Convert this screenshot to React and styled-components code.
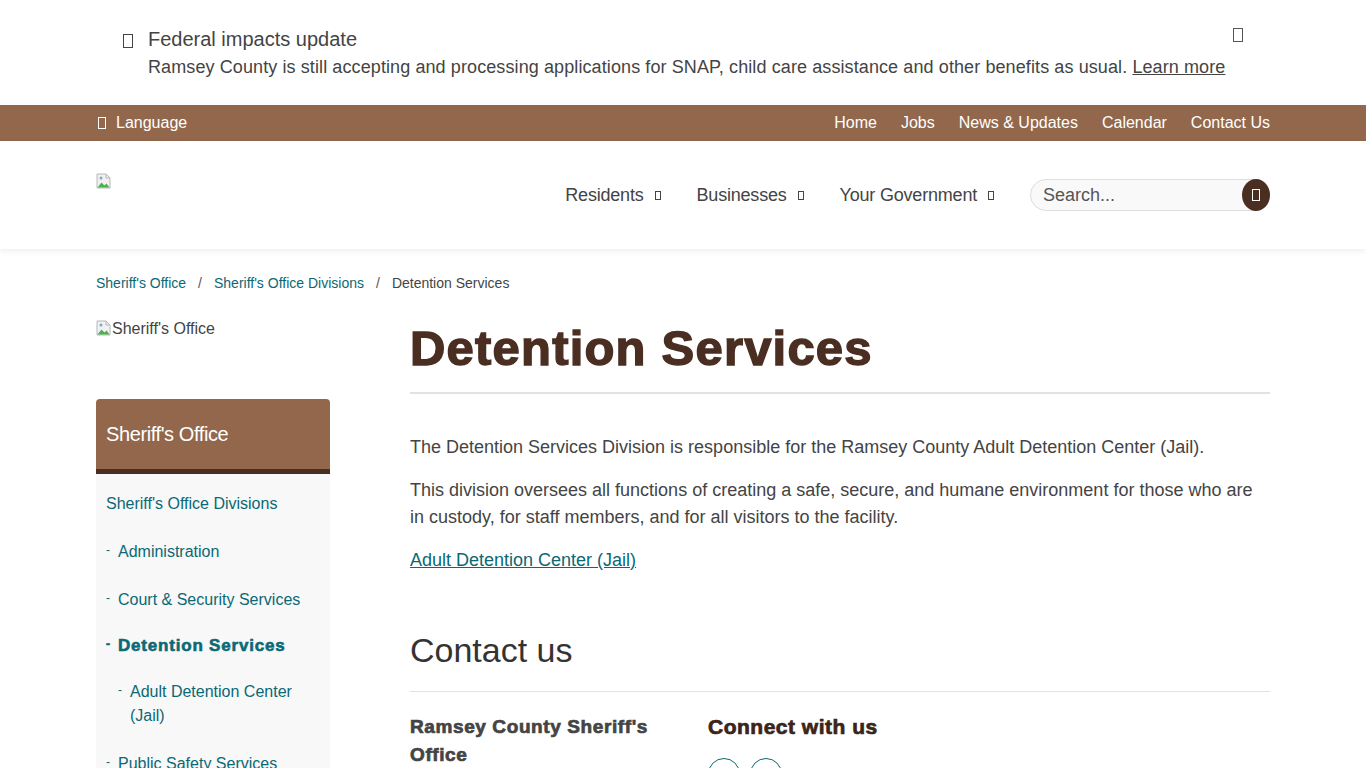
import React from 'react';
import styled, { createGlobalStyle } from 'styled-components';

const Global = createGlobalStyle`
  body {
    margin: 0;
    font-family: "Liberation Sans", Arial, sans-serif;
    color: #444;
    background: #fff;
  }
  * { box-sizing: border-box; }
`;

const Wrap = styled.div`
  width: 1174px;
  margin: 0 auto;
`;

const Tofu = styled.span`
  display: inline-block;
  width: ${(p) => p.$w || 9}px;
  height: ${(p) => p.$h || 14}px;
  border: 1px solid ${(p) => p.$color || 'currentColor'};
  vertical-align: middle;
`;

const Alert = styled.div`
  height: 105px;
  padding-top: 27px;
`;

const AlertRow = styled.div`
  display: flex;
  padding-left: 27px;
`;

const AlertIcon = styled.div`
  width: 25px;
  padding-top: 4px;
  color: #444;
`;

const AlertBody = styled.div`
  flex: 1;
`;

const AlertTitle = styled.div`
  font-size: 20px;
  line-height: 24px;
  color: #444;
`;

const AlertText = styled.div`
  font-size: 18px;
  line-height: 32px;
  color: #444;
  letter-spacing: 0.1px;
  a { color: #444; }
`;

const Close = styled.div`
  width: 37px;
  margin-top: -2px;
  color: #555;
`;

const UtilBar = styled.div`
  background: #93674b;
  height: 36px;
  color: #fff;
  font-size: 16px;
`;

const UtilInner = styled(Wrap)`
  display: flex;
  align-items: center;
  justify-content: space-between;
  height: 36px;
`;

const Lang = styled.div`
  display: flex;
  align-items: center;
  gap: 10px;
  padding-left: 2px;
`;

const UtilLinks = styled.nav`
  display: flex;
  gap: 24px;
`;

const Header = styled.header`
  height: 108px;
  background: #fff;
  box-shadow: 0 2px 6px rgba(0, 0, 0, 0.07);
  position: relative;
`;

const HeaderInner = styled(Wrap)`
  display: flex;
  align-items: center;
  justify-content: space-between;
  height: 108px;
`;

const LogoSlot = styled.div`
  align-self: flex-start;
  padding-top: 32px;
`;

const MainNav = styled.nav`
  display: flex;
  align-items: center;
`;

const NavItem = styled.div`
  display: flex;
  align-items: center;
  gap: 11px;
  font-size: 18px;
  color: #444;
  margin-right: 36px;
  letter-spacing: -0.2px;
`;

const Search = styled.div`
  position: relative;
  width: 240px;
  height: 32px;
`;

const SearchInput = styled.input`
  width: 100%;
  height: 32px;
  border: 1px solid #ddd;
  border-radius: 16px;
  background: #f9f9f9;
  padding: 0 36px 0 12px;
  font-family: "Liberation Sans", Arial, sans-serif;
  font-size: 18px;
  color: #444;
  outline: none;
  &::placeholder { color: #555; }
`;

const SearchBtn = styled.button`
  position: absolute;
  right: 0;
  top: 0;
  width: 28px;
  height: 32px;
  border: none;
  border-radius: 50%;
  background: #4b2e22;
  display: flex;
  align-items: center;
  justify-content: center;
  padding: 0;
`;

const Crumbs = styled.div`
  display: flex;
  gap: 12px;
  font-size: 14px;
  padding-top: 26px;
  height: 68px;
  a { color: #0b6874; text-decoration: none; }
`;

const Sep = styled.span`
  color: #555;
`;

const Body = styled(Wrap)`
  display: flex;
  gap: 80px;
`;

const Side = styled.aside`
  width: 234px;
  flex-shrink: 0;
`;

const AltImg = styled.div`
  display: flex;
  align-items: flex-start;
  font-size: 16px;
  color: #444;
  height: 82px;
  padding-top: 3px;
`;

const SideBox = styled.div`
  border-radius: 4px 4px 0 0;
  overflow: hidden;
`;

const SideHead = styled.div`
  background: #93674b;
  color: #fff;
  font-size: 20px;
  height: 75px;
  padding: 24px 10px 0;
  border-bottom: 5px solid #4b2e22;
  letter-spacing: -0.4px;
`;

const SideList = styled.ul`
  list-style: none;
  margin: 0;
  padding: 6px 0 0;
  background: #f8f8f9;
`;

const SideItem = styled.li`
  display: flex;
  padding: 12px 10px 12px ${(p) => 10 + (p.$level || 0) * 12}px;
  font-size: 16px;
  line-height: 24px;
  color: #0b6874;
  font-weight: ${(p) => (p.$active ? 700 : 400)};
  ${(p) => p.$active && 'padding-top: 10px; padding-bottom: 10px; -webkit-text-stroke: 0.6px #0b6874; letter-spacing: 0.8px; font-size: 17px;'}
`;

const Dash = styled.span`
  width: 12px;
  flex-shrink: 0;
  font-size: 12px;
  line-height: 20px;
  letter-spacing: 0;
`;

const ItemText = styled.span`
  max-width: ${(p) => p.$max || 220}px;
`;

const Main = styled.main`
  flex: 1;
`;

const H1 = styled.h1`
  margin: 0;
  padding-top: 5px;
  font-size: 49px;
  line-height: 52px;
  font-weight: 700;
  letter-spacing: 1.2px;
  color: #4b2e22;
  -webkit-text-stroke: 1.4px #4b2e22;
  padding-bottom: 18px;
  border-bottom: 2px solid #e2e2e2;
`;

const P = styled.p`
  font-size: 18px;
  line-height: 27px;
  margin: 0 0 16px;
  color: #444;
  &:first-of-type { margin-top: 40px; }
  a { color: #0b6874; }
`;

const H2 = styled.h2`
  font-size: 34px;
  font-weight: 400;
  color: #333;
  margin: 56px 0 0;
  line-height: 40px;
  padding-bottom: 21px;
  border-bottom: 1px solid #e2e2e2;
`;

const Cols = styled.div`
  display: flex;
  padding-top: 21px;
`;

const Col = styled.div`
  width: ${(p) => p.$w}px;
`;

const OrgName = styled.div`
  font-size: 19px;
  line-height: 28px;
  font-weight: 700;
  color: #444;
  letter-spacing: 0.6px;
  -webkit-text-stroke: 0.7px #444;
  width: 250px;
`;

const H3 = styled.div`
  font-size: 21px;
  line-height: 28px;
  font-weight: 700;
  color: #3b2418;
  letter-spacing: 0.5px;
  -webkit-text-stroke: 0.7px #3b2418;
`;

const Socials = styled.div`
  display: flex;
  gap: 10px;
  margin-top: 17px;
`;

const Circle = styled.div`
  width: 32px;
  height: 32px;
  border-radius: 50%;
  border: 1px solid #0b6874;
`;

const Broken = () => (
  <svg width="16" height="16" viewBox="0 0 16 16">
    <path d="M1 1h9l4 4v10H1z" fill="#f1f1f1" stroke="#b8b8b8" />
    <path d="M10 1v4h4" fill="none" stroke="#b8b8b8" />
    <path d="M1.5 14.5l4-5 3 3 2-2 3 4z" fill="#4caf50" />
    <circle cx="5" cy="5" r="1.5" fill="#7aa6d8" />
  </svg>
);

export default function App() {
  return (
    <>
      <Global />
      <Alert>
        <Wrap>
          <AlertRow>
            <AlertIcon><Tofu $w={10} $h={14} /></AlertIcon>
            <AlertBody>
              <AlertTitle>Federal impacts update</AlertTitle>
              <AlertText>
                Ramsey County is still accepting and processing applications for SNAP, child care assistance and other benefits as usual. <a href="#">Learn more</a>
              </AlertText>
            </AlertBody>
            <Close><Tofu $w={10} $h={14} /></Close>
          </AlertRow>
        </Wrap>
      </Alert>
      <UtilBar>
        <UtilInner>
          <Lang><Tofu $w={8} $h={12} />Language</Lang>
          <UtilLinks>
            <span>Home</span>
            <span>Jobs</span>
            <span>News &amp; Updates</span>
            <span>Calendar</span>
            <span>Contact Us</span>
          </UtilLinks>
        </UtilInner>
      </UtilBar>
      <Header>
        <HeaderInner>
          <LogoSlot><Broken /></LogoSlot>
          <MainNav>
            <NavItem>Residents <Tofu $w={6} $h={9} /></NavItem>
            <NavItem>Businesses <Tofu $w={6} $h={9} /></NavItem>
            <NavItem>Your Government <Tofu $w={6} $h={9} /></NavItem>
            <Search>
              <SearchInput placeholder="Search..." />
              <SearchBtn><Tofu $w={8} $h={12} $color="#fff" /></SearchBtn>
            </Search>
          </MainNav>
        </HeaderInner>
      </Header>
      <Wrap>
        <Crumbs>
          <a href="#">Sheriff's Office</a>
          <Sep>/</Sep>
          <a href="#">Sheriff's Office Divisions</a>
          <Sep>/</Sep>
          <span>Detention Services</span>
        </Crumbs>
      </Wrap>
      <Body>
        <Side>
          <AltImg><Broken />Sheriff's Office</AltImg>
          <SideBox>
            <SideHead>Sheriff's Office</SideHead>
            <SideList>
              <SideItem>Sheriff's Office Divisions</SideItem>
              <SideItem><Dash>-</Dash><ItemText>Administration</ItemText></SideItem>
              <SideItem><Dash>-</Dash><ItemText>Court &amp; Security Services</ItemText></SideItem>
              <SideItem $active><Dash>-</Dash><ItemText>Detention Services</ItemText></SideItem>
              <SideItem $level={1}><Dash>-</Dash><ItemText $max={170}>Adult Detention Center (Jail)</ItemText></SideItem>
              <SideItem><Dash>-</Dash><ItemText>Public Safety Services</ItemText></SideItem>
            </SideList>
          </SideBox>
        </Side>
        <Main>
          <H1>Detention Services</H1>
          <P>The Detention Services Division is responsible for the Ramsey County Adult Detention Center (Jail).</P>
          <P>This division oversees all functions of creating a safe, secure, and humane environment for those who are in custody, for staff members, and for all visitors to the facility.</P>
          <P><a href="#">Adult Detention Center (Jail)</a></P>
          <H2>Contact us</H2>
          <Cols>
            <Col $w={298}>
              <OrgName>Ramsey County Sheriff's Office</OrgName>
            </Col>
            <Col $w={300}>
              <H3>Connect with us</H3>
              <Socials>
                <Circle />
                <Circle />
              </Socials>
            </Col>
          </Cols>
        </Main>
      </Body>
    </>
  );
}
